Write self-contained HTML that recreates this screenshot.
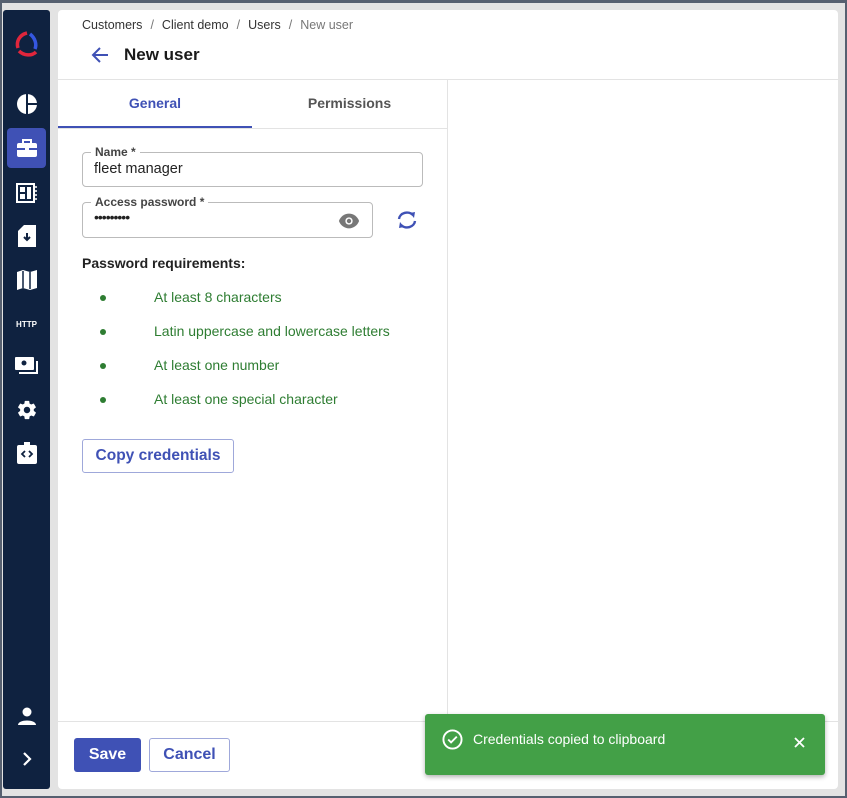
<!DOCTYPE html><html><head><style>
*{box-sizing:border-box;margin:0;padding:0}
body{width:847px;height:798px;background:#e3e3e3;font-family:"Liberation Sans",sans-serif;position:relative;overflow:hidden;border:2px solid #566070;border-top-width:3px}
.side{position:absolute;left:1px;top:7px;width:47px;height:779px;background:#0f2240;border-radius:3px}
.ic{position:absolute;left:0;width:47px;display:flex;justify-content:center;align-items:center;color:#fff}
.card{position:absolute;left:56px;top:7px;width:780px;height:779px;background:#fff;border-radius:4px}
.abs{position:absolute}
.bc{left:24px;top:9px;font-size:12.5px;color:#333}
.bc span{color:#777;margin:0 8px}
.title{left:66px;top:36px;font-size:17px;font-weight:bold;color:#1a1a1a}
.fld{position:absolute;border:1px solid #bbb;border-radius:4px}
.lab{position:absolute;top:-8px;left:8px;background:#fff;padding:0 4px;font-size:12px;color:#444;font-weight:bold}
.req{position:absolute;left:24px;font-size:14px;color:#2e7d32}
.req i{position:absolute;left:18px;top:6px;width:6px;height:6px;border-radius:50%;background:#2e7d32}
.req b{font-weight:normal;position:absolute;left:72px;white-space:nowrap}
.btn{position:absolute;border-radius:3px;font-size:16px;font-weight:bold;display:flex;align-items:center;justify-content:center}
</style></head><body>
<div class="side">
<div class="ic" style="top:18px;height:32px"><svg width="28" height="28" viewBox="0 0 28 28"><path d="M14 3 C6 5 3 12 5 18" stroke="#e0263c" stroke-width="3.5" fill="none"/><path d="M6 21 C11 26 19 26 23 22" stroke="#e0263c" stroke-width="3.5" fill="none"/><path d="M17 4 C22 8 24 14 22 19" stroke="#3557e0" stroke-width="3.5" fill="none"/></svg></div>
<div class="ic" style="top:80px;height:28px"><svg width="22" height="22" viewBox="0 0 22 22"><circle cx="11" cy="11" r="10" fill="#fff"/><path d="M11 1V21M11 11H21" stroke="#0f2240" stroke-width="2"/></svg></div>
<div class="ic" style="top:118px;height:40px;left:4px;width:39px;background:#3f51b5;border-radius:4px"><svg width="20" height="18" viewBox="0 0 20 18"><rect x="6" y="1" width="8" height="4" fill="none" stroke="#fff" stroke-width="2"/><rect x="0" y="4" width="20" height="14" rx="2" fill="#fff"/><rect x="0" y="9" width="20" height="2" fill="#3f51b5"/><rect x="8" y="8" width="4" height="4" fill="#fff"/></svg></div>
<div class="ic" style="top:169px;height:28px"><svg width="22" height="20" viewBox="0 0 22 20"><rect x="1" y="1" width="17" height="18" fill="none" stroke="#fff" stroke-width="2"/><rect x="4" y="4" width="5" height="5" fill="#fff"/><rect x="4" y="11" width="5" height="5" fill="#fff"/><rect x="11" y="4" width="4" height="12" fill="#fff"/><path d="M19 4h2M19 8h2M19 12h2M19 16h2" stroke="#fff" stroke-width="1.5"/></svg></div>
<div class="ic" style="top:212px;height:28px"><svg width="18" height="22" viewBox="0 0 18 22"><path d="M6 0H18V22H0V6Z" fill="#fff"/><path d="M9 8V15M6 12L9 15L12 12" stroke="#0f2240" stroke-width="2" fill="none"/></svg></div>
<div class="ic" style="top:256px;height:28px"><svg width="20" height="20" viewBox="0 0 20 20"><path d="M0 2L6 0L13 2L20 0V18L13 20L6 18L0 20Z" fill="#fff"/><path d="M6 1V18M13 2V19" stroke="#0f2240" stroke-width="1.5"/></svg></div>
<div class="ic" style="top:304px;height:20px;font-size:8px;font-weight:bold">HTTP</div>
<div class="ic" style="top:342px;height:28px"><svg width="24" height="20" viewBox="0 0 24 20"><rect x="0" y="1" width="19" height="13" rx="1" fill="#fff"/><circle cx="9" cy="7" r="2.5" fill="#0f2240"/><path d="M22 5V17H4" stroke="#fff" stroke-width="2" fill="none"/></svg></div>
<div class="ic" style="top:386px;height:28px"><svg width="22" height="22" viewBox="0 0 24 24"><path fill="#fff" d="M19.4 13c.04-.3.06-.64.06-1s-.02-.7-.07-1l2.1-1.650c.2-.15.24-.42.12-.64l-2-3.46c-.12-.22-.39-.3-.61-.22l-2.49 1c-.52-.4-1.080-.73-1.690-.98l-.38-2.650A.49.49 0 0 0 14 2h-4c-.25 0-.46.18-.49.42l-.38 2.650c-.61.25-1.170.59-1.690.98l-2.490-1c-.23-.09-.49 0-.61.22l-2 3.460c-.13.22-.07.49.12.64L4.57 11c-.05.32-.07.66-.07 1s.02.68.07 1l-2.110 1.650c-.19.15-.24.42-.12.64l2 3.460c.12.22.39.3.61.22l2.490-1c.52.4 1.080.73 1.690.98l.38 2.650c.03.24.24.42.49.42h4c.25 0 .46-.18.49-.42l.38-2.650c.61-.25 1.170-.59 1.690-.98l2.490 1c.23.09.49 0 .61-.22l2-3.460c.12-.22.07-.49-.12-.64L19.4 13zM12 15.5c-1.930 0-3.5-1.570-3.5-3.5s1.570-3.5 3.5-3.5 3.5 1.570 3.5 3.5-1.570 3.5-3.5 3.5z"/></svg></div>
<div class="ic" style="top:429px;height:28px"><svg width="20" height="22" viewBox="0 0 20 22"><rect x="0" y="3" width="20" height="19" rx="2" fill="#fff"/><rect x="7" y="0" width="6" height="4" fill="#fff"/><path d="M8 9L5 12L8 15M12 9L15 12L12 15" stroke="#0f2240" stroke-width="1.8" fill="none"/></svg></div>
<div class="ic" style="top:692px;height:28px"><svg width="18" height="18" viewBox="0 0 18 18"><circle cx="9" cy="5" r="4.5" fill="#fff"/><path d="M0 18C0 12 18 12 18 18Z" fill="#fff"/></svg></div>
<div class="ic" style="top:737px;height:24px"><svg width="10" height="14" viewBox="0 0 10 14"><path d="M2 1L8 7L2 13" stroke="#fff" stroke-width="2.2" fill="none"/></svg></div>
</div>
<div class="card">
<div class="abs bc" style="top:8px">Customers<span>/</span>Client demo<span>/</span>Users<span>/</span><em style="font-style:normal;color:#777">New user</em></div>
<svg class="abs" style="left:32px;top:36px" width="20" height="18" viewBox="0 0 20 18"><path d="M18 9H3M10 2L3 9L10 16" stroke="#3f51b5" stroke-width="2" fill="none"/></svg>
<div class="abs title" style="top:35px">New user</div>
<div class="abs" style="left:0;top:69px;width:780px;height:1px;background:#e3e3e3"></div>
<div class="abs" style="left:389px;top:70px;width:1px;height:641px;background:#e3e3e3"></div>
<div class="abs" style="left:0;top:118px;width:389px;height:1px;background:#e3e3e3"></div>
<div class="abs" style="left:0;top:116px;width:194px;height:2px;background:#3f51b5"></div>
<div class="abs" style="left:0;top:85px;width:194px;text-align:center;font-size:14px;font-weight:bold;color:#3f51b5">General</div>
<div class="abs" style="left:194px;top:85px;width:195px;text-align:center;font-size:14px;font-weight:bold;color:#555">Permissions</div>
<div class="fld" style="left:24px;top:142px;width:341px;height:35px"><div class="lab">Name *</div><div class="abs" style="left:11px;top:8px;font-size:14.5px;color:#222">fleet manager</div></div>
<div class="fld" style="left:24px;top:192px;width:291px;height:36px"><div class="lab">Access password *</div><div class="abs" style="left:11px;top:6px;font-size:14px;color:#222;letter-spacing:-1px">•••••••••</div>
<svg class="abs" style="left:255px;top:10px" width="22" height="16" viewBox="0 0 24 16"><path d="M12 0C7 0 2.7 3.3 1 8c1.7 4.7 6 8 11 8s9.3-3.3 11-8C21.3 3.3 17 0 12 0z" fill="#777"/><circle cx="12" cy="8" r="4" fill="#fff"/><circle cx="12" cy="8" r="2.4" fill="#777"/></svg></div>
<svg class="abs" style="left:338px;top:200px" width="22" height="20" viewBox="0 0 22 20"><path d="M3 9A8 7 0 0 1 17 5" stroke="#3f51b5" stroke-width="2.4" fill="none"/><path d="M14 3L19 2L18 8Z" fill="#3f51b5"/><path d="M19 11A8 7 0 0 1 5 15" stroke="#3f51b5" stroke-width="2.4" fill="none"/><path d="M8 17L3 18L4 12Z" fill="#3f51b5"/></svg>
<div class="abs" style="left:24px;top:245px;font-size:14px;font-weight:bold;color:#222">Password requirements:</div>
<div class="req" style="top:279px"><i></i><b>At least 8 characters</b></div>
<div class="req" style="top:313px"><i></i><b>Latin uppercase and lowercase letters</b></div>
<div class="req" style="top:347px"><i></i><b>At least one number</b></div>
<div class="req" style="top:381px"><i></i><b>At least one special character</b></div>
<div class="btn" style="left:24px;top:429px;width:152px;height:34px;border:1px solid #9fa8da;color:#3f51b5;font-size:15.5px">Copy credentials</div>
<div class="abs" style="left:0;top:711px;width:780px;height:1px;background:#e3e3e3"></div>
<div class="btn" style="left:16px;top:728px;width:67px;height:34px;background:#3f51b5;color:#fff">Save</div>
<div class="btn" style="left:91px;top:728px;width:81px;height:34px;border:1px solid #9fa8da;color:#3f51b5">Cancel</div>
</div>
<div class="abs" style="left:423px;top:711px;width:400px;height:61px;background:#43a047;border-radius:3px;box-shadow:0 2px 5px rgba(0,0,0,.3);color:#fff">
<svg class="abs" style="left:17px;top:15px" width="21" height="21" viewBox="0 0 22 22"><circle cx="11" cy="11" r="9.5" stroke="#fff" stroke-width="2" fill="none"/><path d="M6.5 11L9.5 14L15.5 8" stroke="#fff" stroke-width="2" fill="none"/></svg>
<div class="abs" style="left:48px;top:17px;font-size:14px">Credentials copied to clipboard</div>
<svg class="abs" style="left:369px;top:23px" width="11" height="11" viewBox="0 0 11 11"><path d="M1 1L10 10M10 1L1 10" stroke="#fff" stroke-width="1.8"/></svg>
</div>
</body></html>
